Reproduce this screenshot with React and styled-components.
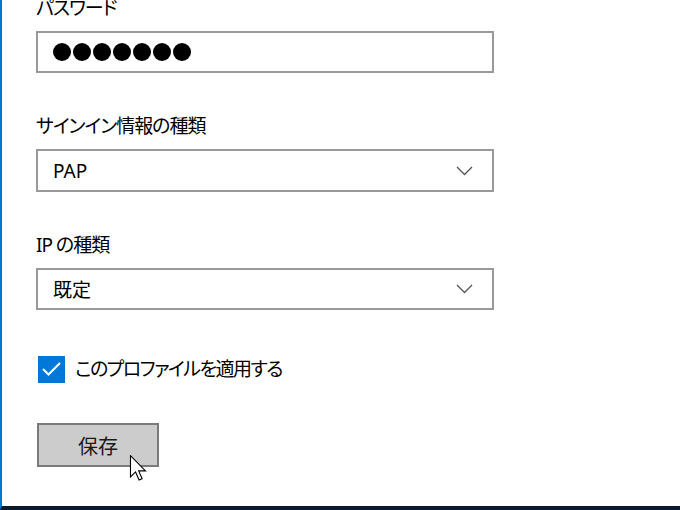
import React from 'react';
import styled, { createGlobalStyle } from 'styled-components';

const GlobalStyle = createGlobalStyle`
  html, body {
    margin: 0;
    padding: 0;
    background: #ffffff;
  }
  body {
    font-family: "Noto Sans", "Noto Sans CJK JP", sans-serif;
  }
`;

const Window = styled.div`
  box-sizing: border-box;
  width: 680px;
  height: 510px;
  overflow: hidden;
  background: #ffffff;
  border-left: 2px solid #0078d7;
  border-bottom: 4px solid #0b1a2c;
`;

const Form = styled.div`
  display: flex;
  flex-direction: column;
  width: 458px;
  margin: -6px 0 0 34px;
`;

const Group = styled.div`
  display: flex;
  flex-direction: column;
  gap: 9px;
  margin-bottom: ${props => (props.$last ? 0 : 39)}px;
`;

const Label = styled.div`
  height: 28px;
  font-size: 19px;
  line-height: 28px;
  letter-spacing: -1px;
  color: #000000;
  font-feature-settings: 'palt';
  white-space: nowrap;
`;

const Field = styled.div`
  box-sizing: border-box;
  display: flex;
  align-items: center;
  justify-content: space-between;
  height: ${props => (props.$tall ? 43 : 42)}px;
  padding: 0 19px 0 15px;
  border: 2px solid #999999;
  background: #ffffff;
  font-size: 19px;
  color: #000000;
  font-feature-settings: 'palt';
`;

const Dots = styled.div`
  display: flex;
  gap: 2px;
`;

const Dot = styled.span`
  width: 18px;
  height: 18px;
  border-radius: 50%;
  background: #000000;
`;

const CheckRow = styled.label`
  display: flex;
  align-items: center;
  gap: 10px;
  height: 28px;
  margin: 45px 0 0 2px;
  font-size: 19px;
  line-height: 28px;
  letter-spacing: -1.5px;
  font-feature-settings: 'palt';
  color: #000000;
  white-space: nowrap;
`;

const CheckBox = styled.span`
  display: flex;
  align-items: center;
  justify-content: center;
  flex: none;
  width: 27px;
  height: 27px;
  background: #0078d7;
`;

const ButtonWrap = styled.div`
  position: relative;
  margin: 40px 0 0 1px;
  width: 122px;
`;

const Button = styled.button`
  box-sizing: border-box;
  width: 122px;
  height: 44px;
  border: 2px solid #7a7a7a;
  background: #cccccc;
  font-family: "Noto Sans CJK JP", sans-serif;
  font-size: 20px;
  color: #1a1a1a;
  padding: 0;
`;

const Cursor = styled.svg`
  position: absolute;
  left: 92px;
  top: 32px;
`;

const Chevron = () => (
  <svg width="17" height="10" viewBox="0 0 17 10">
    <path d="M1 1 L8.5 8.5 L16 1" fill="none" stroke="#555555" strokeWidth="1.3" />
  </svg>
);

const Check = () => (
  <svg width="21" height="16" viewBox="0 0 21 16">
    <path d="M2 8 L7.5 13.5 L19 2" fill="none" stroke="#ffffff" strokeWidth="2" />
  </svg>
);

const App = () => {
  return (
    <>
      <GlobalStyle />
      <Window>
        <Form>
          <Group>
            <Label>パスワード</Label>
            <Field>
              <Dots>
                {Array.from({ length: 7 }).map((_, i) => (
                  <Dot key={i} />
                ))}
              </Dots>
            </Field>
          </Group>
          <Group>
            <Label>サインイン情報の種類</Label>
            <Field $tall>
              <span>PAP</span>
              <Chevron />
            </Field>
          </Group>
          <Group $last>
            <Label>IP の種類</Label>
            <Field>
              <span>既定</span>
              <Chevron />
            </Field>
          </Group>
          <CheckRow>
            <CheckBox>
              <Check />
            </CheckBox>
            このプロファイルを適用する
          </CheckRow>
          <ButtonWrap>
            <Button>保存</Button>
            <Cursor width="18" height="26" viewBox="0 0 12 19">
              <path
                d="M0.5 0.5 L0.5 16 L4.2 12.4 L6.8 18.3 L9 17.3 L6.5 11.6 L11.5 11.6 Z"
                fill="#ffffff"
                stroke="#000000"
                strokeWidth="0.8"
                strokeLinejoin="miter"
              />
            </Cursor>
          </ButtonWrap>
        </Form>
      </Window>
    </>
  );
};

export default App;
